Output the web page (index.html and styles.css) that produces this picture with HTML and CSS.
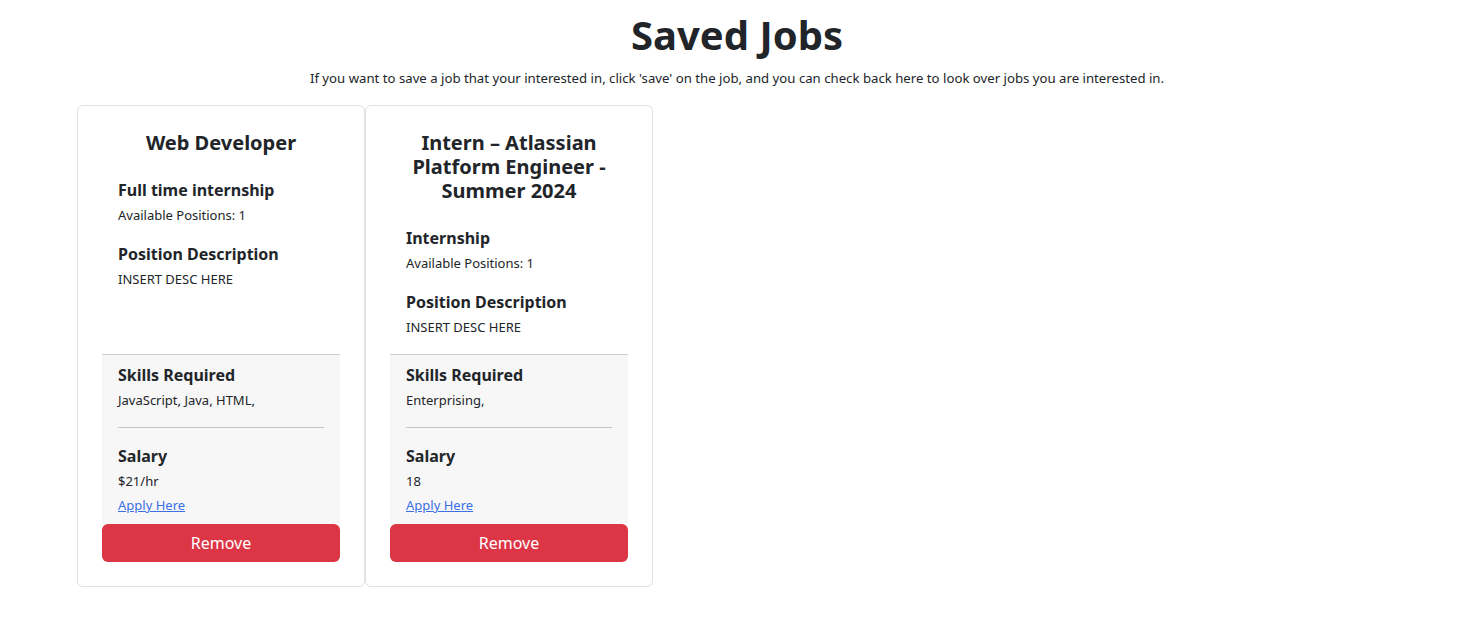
FILE: index.html
```html
<!DOCTYPE html>
<html lang="en">
<head>
<meta charset="utf-8">
<title>Saved Jobs</title>
<link rel="stylesheet" href="styles.css">
</head>
<body>
<header class="intro">
  <h1 class="page-title">Saved Jobs</h1>
  <p class="page-sub">If you want to save a job that your interested in, click 'save' on the job, and you can check back here to look over jobs you are interested in.</p>
</header>
<main class="cards">
  <article class="card">
    <h2 class="card-title">Web Developer</h2>
    <section class="block">
      <h3 class="label">Full time internship</h3>
      <p class="value">Available Positions: 1</p>
      <h3 class="label">Position Description</h3>
      <p class="value last">INSERT DESC HERE</p>
    </section>
    <section class="extra">
      <h3 class="label">Skills Required</h3>
      <p class="value">JavaScript, Java, HTML,</p>
      <hr class="rule">
      <h3 class="label">Salary</h3>
      <p class="value tight">$21/hr</p>
      <a class="apply" href="#">Apply Here</a>
    </section>
    <button class="remove" type="button">Remove</button>
  </article>
  <article class="card">
    <h2 class="card-title">Intern – Atlassian Platform Engineer - Summer 2024</h2>
    <section class="block">
      <h3 class="label">Internship</h3>
      <p class="value">Available Positions: 1</p>
      <h3 class="label">Position Description</h3>
      <p class="value last">INSERT DESC HERE</p>
    </section>
    <section class="extra">
      <h3 class="label">Skills Required</h3>
      <p class="value">Enterprising,</p>
      <hr class="rule">
      <h3 class="label">Salary</h3>
      <p class="value tight">18</p>
      <a class="apply" href="#">Apply Here</a>
    </section>
    <button class="remove" type="button">Remove</button>
  </article>
</main>
</body>
</html>
```
FILE: styles.css
```css
* { box-sizing: border-box; }
body {
  margin: 0;
  font-family: "Noto Sans", "Open Sans", sans-serif;
  color: #212529;
  background: #fff;
}
.intro { text-align: center; padding: 11px 0 0 13px; }
.page-title {
  margin: 0;
  font-size: 40px;
  line-height: 48px;
  font-weight: 700;
}
.page-sub {
  margin: 9px 0 0;
  font-size: 13.2px;
  line-height: 20px;
}
.cards {
  display: flex;
  align-items: stretch;
  padding-left: 77px;
  margin-top: 17px;
}
.card {
  width: 288px;
  border: 1px solid #dee2e6;
  border-radius: 6px;
  padding: 25px 24px 24px;
  display: flex;
  flex-direction: column;
}
.card-title {
  margin: 0 8px;
  text-align: center;
  font-size: 20px;
  line-height: 24px;
  font-weight: 700;
}
.block { padding: 26px 16px 0; }
.label {
  margin: 0 0 5px;
  font-size: 16px;
  line-height: 19px;
  font-weight: 700;
}
.value {
  margin: 0 0 20px;
  font-size: 13px;
  line-height: 20px;
}
.value.last { margin-bottom: 17px; }
.extra {
  margin-top: auto;
  background: #f7f7f7;
  border-top: 1px solid #cfcfcf;
  padding: 11px 16px 9px;
}
.extra .value { margin-bottom: 17px; }
.extra .value.tight { margin-bottom: 4px; }
.rule {
  border: 0;
  border-top: 1px solid #c6c6c6;
  margin: 0 0 19px;
  opacity: 1;
}
.apply {
  display: block;
  font-size: 13px;
  line-height: 20px;
  color: #3b6fe6;
  text-decoration: underline;
  width: max-content;
}
.remove {
  display: block;
  width: 100%;
  height: 38px;
  border: 0;
  border-radius: 6px;
  background: #dc3545;
  color: #fff;
  font-family: inherit;
  font-size: 16px;
}
```
